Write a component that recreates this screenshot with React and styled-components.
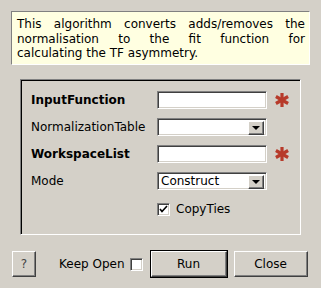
import React, { useState } from 'react';
import styled, { createGlobalStyle } from 'styled-components';

const GlobalStyle = createGlobalStyle`
  html, body {
    margin: 0;
    padding: 0;
    background: #d4d0c8;
  }
  body {
    font-family: "DejaVu Sans", "Liberation Sans", sans-serif;
    font-size: 12px;
    color: #000;
  }
`;

const Dialog = styled.div`
  width: 321px;
  height: 288px;
  box-sizing: border-box;
  padding-top: 11px;
  background: #d4d0c8;
  display: flex;
  flex-direction: column;
`;

const InfoBox = styled.div`
  margin: 0 11px;
  height: 54px;
  box-sizing: border-box;
  padding: 5px 4px 0 5px;
  background: #ffffe1;
  border-top: 1px solid #808080;
  border-left: 1px solid #808080;
  border-right: 1px solid #ffffff;
  border-bottom: 1px solid #ffffff;
  line-height: 14.5px;
  font-size: 12px;
`;

const InfoLine = styled.div`
  text-align: ${(p) => (p.$justify ? 'justify' : 'left')};
  text-align-last: ${(p) => (p.$justify ? 'justify' : 'left')};
  white-space: nowrap;
`;

const Frame = styled.div`
  margin: 14px 20px 0 20px;
  height: 156px;
  box-sizing: border-box;
  border-top: 1px solid #808080;
  border-left: 1px solid #808080;
  border-right: 1px solid #ffffff;
  border-bottom: 1px solid #ffffff;
  box-shadow: inset 1px 1px 0 #000;
  padding: 11px 0 0 10px;
  display: grid;
  grid-template-columns: 126px 110px 24px;
  grid-auto-rows: 18px;
  row-gap: 9px;
  align-items: center;
`;

const Label = styled.div`
  font-weight: ${(p) => (p.$bold ? 'bold' : 'normal')};
  font-size: 12px;
  white-space: nowrap;
`;

const Sunken = styled.div`
  height: 18px;
  box-sizing: border-box;
  border-top: 1px solid #808080;
  border-left: 1px solid #808080;
  border-right: 1px solid #ffffff;
  border-bottom: 1px solid #ffffff;
  box-shadow: inset 1px 1px 0 #404040, inset -1px -1px 0 #d4d0c8;
  background: #fff;
  display: flex;
  align-items: center;
  padding-left: 3px;
  position: relative;
  font-size: 12px;
`;

const ArrowButton = styled.div`
  position: absolute;
  right: 2px;
  top: 2px;
  width: 16px;
  height: 14px;
  box-sizing: border-box;
  background: #d4d0c8;
  border-top: 1px solid #ffffff;
  border-left: 1px solid #ffffff;
  border-right: 1px solid #404040;
  border-bottom: 1px solid #404040;
  box-shadow: inset -1px -1px 0 #808080;
  display: flex;
  align-items: center;
  justify-content: center;

  &::after {
    content: '';
    width: 0;
    height: 0;
    border-left: 4px solid transparent;
    border-right: 4px solid transparent;
    border-top: 4px solid #000;
    margin: 0 1px 1px 0;
  }
`;

const Star = styled.svg`
  margin-left: 7px;
  display: block;
`;

const CheckRow = styled.label`
  grid-column: 2 / 4;
  display: flex;
  align-items: center;
  gap: 6px;
  font-size: 12px;
  margin-top: 2px;
`;

const Box = styled.span`
  width: 13px;
  height: 13px;
  box-sizing: border-box;
  background: #fff;
  border-top: 1px solid #808080;
  border-left: 1px solid #808080;
  border-right: 1px solid #ffffff;
  border-bottom: 1px solid #ffffff;
  box-shadow: inset 1px 1px 0 #404040, inset -1px -1px 0 #d4d0c8;
  display: flex;
  align-items: center;
  justify-content: center;
`;

const Footer = styled.div`
  margin-top: 16px;
  padding: 0 12px;
  display: flex;
  align-items: center;
`;

const Button = styled.button`
  height: 26px;
  width: ${(p) => p.$w}px;
  box-sizing: border-box;
  margin-left: ${(p) => p.$ml || 0}px;
  padding: 0;
  font-family: "DejaVu Sans", "Liberation Sans", sans-serif;
  font-size: 12px;
  color: ${(p) => (p.$dim ? '#444' : '#000')};
  background: #d4d0c8;
  border: 1px solid;
  border-color: #ffffff #404040 #404040 #ffffff;
  box-shadow: inset -1px -1px 0 #808080;
  outline: ${(p) => (p.$default ? '1px solid #000' : 'none')};
  outline-offset: 0;
`;

const KeepOpen = styled.label`
  margin-left: 23px;
  display: flex;
  align-items: center;
  gap: 5px;
  font-size: 12px;
`;

function Asterisk() {
  return (
    <Star width="16" height="16" viewBox="0 0 16 16">
      <g stroke="#b73a2a" strokeWidth="3.2" strokeLinecap="butt">
        <line x1="8" y1="1" x2="8" y2="15" />
        <line x1="1.9" y1="4.5" x2="14.1" y2="11.5" />
        <line x1="1.9" y1="11.5" x2="14.1" y2="4.5" />
      </g>
    </Star>
  );
}

export default function App() {
  const [copyTies, setCopyTies] = useState(true);

  return (
    <Dialog>
      <GlobalStyle />
      <InfoBox>
        <InfoLine $justify>This algorithm converts adds/removes the</InfoLine>
        <InfoLine $justify>normalisation to the fit function for</InfoLine>
        <InfoLine>calculating the TF asymmetry.</InfoLine>
      </InfoBox>

      <Frame>
        <Label $bold>InputFunction</Label>
        <Sunken />
        <Asterisk />

        <Label>NormalizationTable</Label>
        <Sunken>
          <ArrowButton />
        </Sunken>
        <span />

        <Label $bold>WorkspaceList</Label>
        <Sunken />
        <Asterisk />

        <Label>Mode</Label>
        <Sunken>
          Construct
          <ArrowButton />
        </Sunken>
        <span />

        <span />
        <CheckRow onClick={() => setCopyTies(!copyTies)}>
          <Box>
            {copyTies && (
              <svg width="9" height="9" viewBox="0 0 9 9">
                <path d="M1 4 L3 6.5 L8 1" stroke="#000" strokeWidth="1.6" fill="none" />
              </svg>
            )}
          </Box>
          CopyTies
        </CheckRow>
      </Frame>

      <Footer>
        <Button $w={24} $dim>?</Button>
        <KeepOpen>
          Keep Open
          <Box />
        </KeepOpen>
        <Button $w={76} $ml={8} $default>Run</Button>
        <Button $w={74} $ml={7}>Close</Button>
      </Footer>
    </Dialog>
  );
}
